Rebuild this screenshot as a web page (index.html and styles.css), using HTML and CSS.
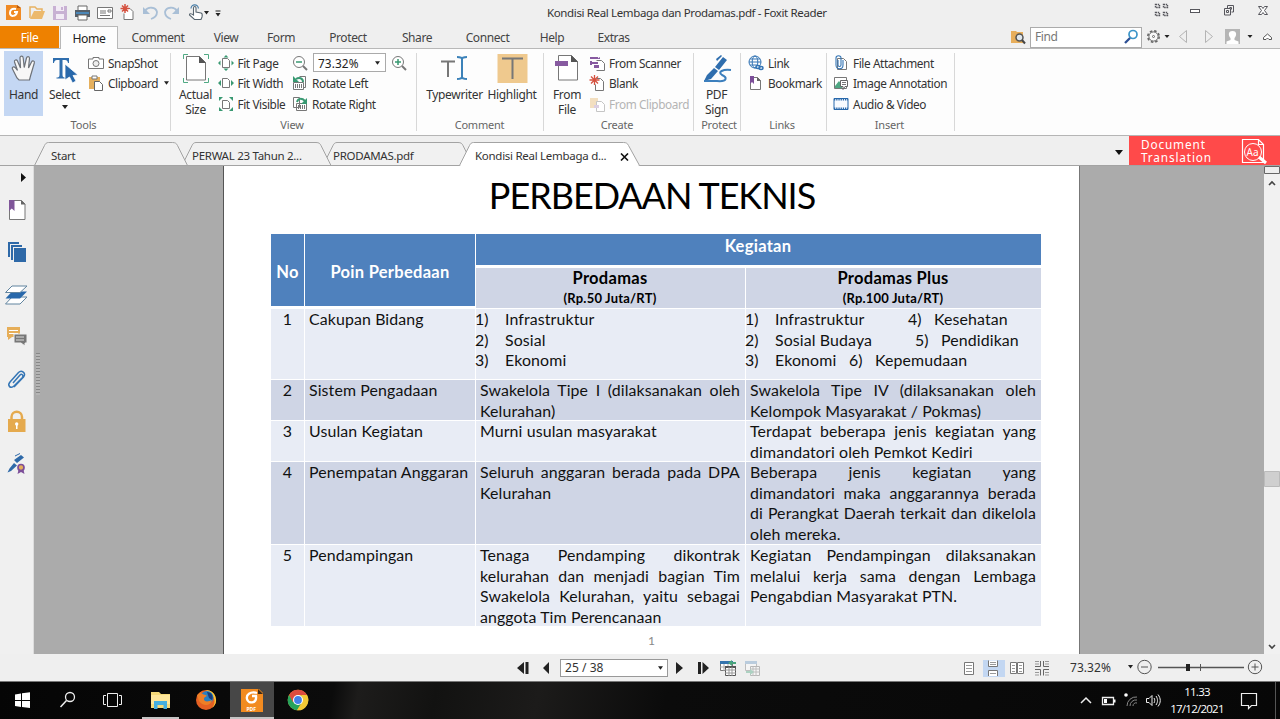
FILE: index.html
```html
<!DOCTYPE html>
<html lang="id">
<head>
<meta charset="utf-8">
<title>Kondisi Real Lembaga dan Prodamas.pdf - Foxit Reader</title>
<link rel="stylesheet" href="styles.css">
</head>
<body>
<svg class="defs" width="0" height="0">
  <symbol id="caret" viewBox="0 0 6 4"><path d="M0 0h6L3 4z" fill="#222"/></symbol>
</svg>

<header class="titlebar">
  <div class="quick">
    <svg width="230" height="26" viewBox="0 0 230 26">
      <path d="M6 5h11l4 3v12H6z" fill="#f08a24"/><path d="M17 5v3h4z" fill="#b85c10"/><path d="M16 9c-4-1-6 1-6 4 0 4 6 4 7-1h-3" fill="none" stroke="#fff" stroke-width="2"/>
      <path d="M30 18V7h5l2 2h5v4" fill="none" stroke="#e8b262" stroke-width="1.5"/><path d="M30 19l4-8h11l-3 8z" fill="#ecb96c"/>
      <path d="M53 6h14v14H53z" fill="#c8b1d3"/><path d="M56 6h8v5h-8zM56 14h8v5h-8z" fill="#f2ebf5"/><path d="M61 7h2v3h-2z" fill="#c8b1d3"/>
      <path d="M78 6h9v5h-9z" fill="#fff" stroke="#666"/><path d="M75 10h15v7H75z" fill="#555f69"/><path d="M76 12h13v2H76z" fill="#4b87b8"/><path d="M78 15h9v5h-9z" fill="#fff" stroke="#666"/>
      <path d="M97.500 7.500h15v11h-15z" fill="#fff" stroke="#777"/><path d="M100 11h6M100 13h6M100 15.500h10M108 10h3v2h-3z" stroke="#777" fill="none"/>
      <path d="M126 8.500h4l3 3v8h-9v-6" fill="#fff" stroke="#777"/><path d="M125 4v9M120.500 8.500h9M122 5.500l6 6M128 5.500l-6 6" stroke="#d55240" stroke-width="1.500"/>
      <path d="M145 11c3-5 11-4 12 1 0 4-3 6-6 7" fill="none" stroke="#a9bfd6" stroke-width="1.800"/><path d="M143 7v7h7z" fill="#a9bfd6"/>
      <path d="M177 11c-3-5-11-4-12 1 0 4 3 6 6 7" fill="none" stroke="#a9bfd6" stroke-width="1.800"/><path d="M179 7v7h-7z" fill="#a9bfd6"/>
      <path d="M193.500 15V8c0-2 2.500-2 2.500 0v4l5 1c1.500.5 1.500 2 1 4l-1 2.500h-6.500l-5-4.500c0-2 2-1.500 4 0z" fill="#fff" stroke="#58656f" stroke-width="1.100"/><path d="M191 8.500a3.700 3.700 0 0 1 7.400 0" fill="none" stroke="#477da8" stroke-width="1.200"/>
      <path d="M204 11h5l-2.500 3.500zM215.500 13h5l-2.500 3.500zM215.500 10.500h5v1h-5z" fill="#222"/>
    </svg>
  </div>
  <h1 class="apptitle">Kondisi Real Lembaga dan Prodamas.pdf - Foxit Reader</h1>
  <svg class="winctl" width="130" height="26" viewBox="1150 0 130 26" fill="none" stroke="#56565c">
    <path d="M1155.500 4.500h4v3h-4zM1163.500 4.500h4v3h-4zM1155.500 12.500h4v3h-4zM1163.500 12.500h4v3h-4z" stroke-dasharray="1.500 .7" stroke-width="1.400"/>
    <rect x="1190.500" y="9.500" width="9" height="3" fill="#fff"/>
    <path d="M1227.500 8V5.500h6v6.500h-2M1224.500 8.500h6v6.500h-6z"/><path d="M1226.500 10.500h2v2h-2zM1229.500 7.500h2v2"/>
    <path d="M1258.500 6.500h3l1.500 2 1.500-2h3l-3 4 3 4h-3l-1.500-2-1.500 2h-3l3-4z" fill="#fff"/>
  </svg>
</header>

<nav class="menubar">
  <span class="file">File</span><span class="home">Home</span><span class="m w80">Comment</span><span class="m w56">View</span><span class="m w54">Form</span><span class="m w80">Protect</span><span class="m w58">Share</span><span class="m w83">Connect</span><span class="m w46">Help</span><span class="m w77">Extras</span>
  <div class="search">
    <svg width="18" height="16" viewBox="0 0 18 16"><path d="M1 2h5l1 1h6v11H1z" fill="#e7ae5c"/><circle cx="9.500" cy="8.500" r="3.500" fill="#dfe7ee" stroke="#555" stroke-width="1.500"/><path d="M12 11l3 3.500" stroke="#444" stroke-width="2"/></svg>
    <label class="find"><span>Find</span><svg width="16" height="16" viewBox="0 0 16 16"><circle cx="10" cy="5.500" r="4" fill="#fff" stroke="#3b94c8" stroke-width="1.700"/><path d="M7 9l-5 5" stroke="#2c4f94" stroke-width="2.300"/></svg></label>
    <svg width="134" height="22" viewBox="1146 26 134 22" fill="none" stroke="#666">
      <circle cx="1153.500" cy="36.500" r="5.700" stroke-dasharray="2.500 1.980" stroke-width="1.600"/><circle cx="1153.500" cy="36.500" r="4.600" fill="#f8f8f8"/><circle cx="1153.500" cy="36.500" r="1"/>
      <path d="M1164.500 35h5l-2.500 3z" fill="#222" stroke="none"/>
      <path d="M1186.500 30.500v12l-7-6zM1205.500 30.500v12l7-6z" stroke="#b3b3b3"/>
      <path d="M1225 29h15v15h-15z" fill="#b5b5b5" stroke="none"/><path d="M1232.500 31c5 0 4 5 2 7v2l4 1.500V44h-12v-2.500l4-1.500v-2c-2-2-3-7 2-7z" fill="#fff" stroke="none"/>
      <path d="M1247.500 35h5l-2.500 3z" fill="#222" stroke="none"/>
      <path d="M1263.500 37.500l4-3.500 4 3.500v2h-2.500l-1.500-1.500-1.500 1.500h-2.500z" fill="#fff" stroke="#555"/>
    </svg>
  </div>
</nav>

<section class="ribbon">
  <div class="group g-tools">
    <div class="body">
      <button class="big on"><svg width="32" height="31" viewBox="0 0 32 31"><path d="M9 25L4.500 16c-1-2 1.500-3 3-1l2 2.500L6.500 9c-.5-2 2-3 3-1l3 7-.5-10c0-2.500 3-2.500 3.200 0l1 9.500L18.500 5c.5-2 3-2 3 .3L20.500 15l3-6c1-2 3.500-1 2.800 1L22.500 23l-1 4H11z" fill="#f7f7f7" stroke="#6e7278" stroke-width="1.200"/></svg><b>Hand</b></button>
      <button class="big"><svg width="32" height="31" viewBox="0 0 32 31"><path d="M4 5h16v5h-1c-.5-2.500-1-3-5.500-3v15c0 2 1 2.500 3 2.500v1H7.500v-1c2 0 3-.5 3-2.500V7C6 7 5.500 7.500 5 10H4z" fill="#2f6eae"/><path d="M16 11l13 11-5 .5 3 5.500-3.500 2-3-6-4.500 3z" fill="#2868ab" stroke="#fff" stroke-width=".8"/></svg><b>Select</b><svg class="car" width="6" height="4"><use href="#caret"/></svg></button>
      <div class="rows tl">
        <p><svg width="16" height="16" viewBox="0 0 16 16"><path d="M1 4h4V2.500h6V4h4.500v9.500H.5V4z" fill="#fff" stroke="#777"/><circle cx="8" cy="8.500" r="3" fill="#eee" stroke="#777"/></svg>SnapShot</p>
        <p><svg width="16" height="16" viewBox="0 0 16 16"><path d="M1 2h11v12H1z" fill="#e6b05d"/><path d="M4 1h5v3H4z" fill="#fff" stroke="#777"/><path d="M6.500 6.500h5l3 3v6h-8z" fill="#fff" stroke="#666"/></svg>Clipboard<svg class="car2" width="5" height="4"><use href="#caret"/></svg></p>
      </div>
    </div>
    <footer>Tools</footer>
  </div>
  <div class="group g-view">
    <div class="body">
      <button class="big wide"><svg width="32" height="31" viewBox="0 0 32 31"><path d="M3.500 6V1.500H8M24 1.500h4.500V6M3.500 25v4.500H8M24 29.500h4.500V25" fill="none" stroke="#50aa84"/><path d="M6.500 3.500h13l6 6v17.500h-19z" fill="#fff" stroke="#777"/><path d="M19 3v7h7z" fill="#555"/></svg><b>Actual<br>Size</b></button>
      <div class="rows v1">
        <p><svg width="16" height="16" viewBox="0 0 16 16"><path d="M4.500 3.500h5l2 2v7h-7z" fill="#fff" stroke="#777"/><path d="M8 0l2.500 2.500h-5zM8 16l2.500-2.500h-5zM0 8l2.500-2.500v5zM16 8l-2.500-2.500v5z" fill="#399972"/></svg>Fit Page</p>
        <p><svg width="16" height="16" viewBox="0 0 16 16"><path d="M4.500 3.500h5l2 2v7h-7z" fill="#fff" stroke="#777"/><path d="M0 8l3-3v6zM16 8l-3-3v6z" fill="#399972"/></svg>Fit Width</p>
        <p><svg width="16" height="16" viewBox="0 0 16 16"><path d="M4.500 4.500h5l2 2v6h-7z" fill="#fff" stroke="#777"/><path d="M1 1h4L1 5zM15 1h-4l4 4zM1 15h4l-4-4zM15 15h-4l4-4z" fill="#399972"/></svg>Fit Visible</p>
      </div>
      <div class="rows v2">
        <p><svg width="16" height="16" viewBox="0 0 16 16"><circle cx="7" cy="7" r="5.500" fill="#fff" stroke="#777"/><path d="M11 11l4 4" stroke="#777" stroke-width="2"/><path d="M4 7h6" stroke="#399972" stroke-width="1.500"/></svg><span class="zoombox">73.32%<svg width="5" height="4"><use href="#caret"/></svg></span><svg width="16" height="16" viewBox="0 0 16 16"><circle cx="7" cy="7" r="5.500" fill="#fff" stroke="#777"/><path d="M11 11l4 4" stroke="#777" stroke-width="2"/><path d="M4 7h6M7 4v6" stroke="#399972" stroke-width="1.500"/></svg></p>
        <p><svg width="16" height="16" viewBox="0 0 16 16"><path d="M7.500 1.500h6v11h-2M1.500 7.500h10v7h-10z" fill="#fff" stroke="#777"/><path d="M3.500 9v4M5.500 9v4M7.500 9v4M9.500 9v4" stroke="#777"/><path d="M11 7c0-4-4-5-7-3" stroke="#399972" stroke-width="2" fill="none"/><path d="M1 1v6h6z" fill="#399972"/></svg>Rotate Left</p>
        <p><svg width="16" height="16" viewBox="0 0 16 16"><path d="M1.500 1.500h6v10h-6zM4.500 7.500h10v7h-10z" fill="#fff" stroke="#777"/><path d="M6.500 9v4M8.500 9v4M10.500 9v4M12.500 9v4" stroke="#777"/><path d="M5 6c1-4 5-4 8-1" stroke="#399972" stroke-width="2" fill="none"/><path d="M15 2v6H9z" fill="#399972"/></svg>Rotate Right</p>
      </div>
    </div>
    <footer>View</footer>
  </div>
  <div class="group g-comment">
    <div class="body">
      <button class="big tw"><svg width="32" height="31" viewBox="0 0 32 31" fill="none"><path d="M2 8.500h14M9 8v16" stroke="#777" stroke-width="2"/><path d="M18 4c3 0 5 1 5 2 0-1 2-2 5-2M23 6v18M18 26c3 0 5-1 5-2 0 1 2 2 5 2" stroke="#3c82b9" stroke-width="2"/></svg><b>Typewriter</b></button>
      <button class="big hl"><svg width="32" height="31" viewBox="0 0 32 31"><path d="M1.500 1h30v29h-30z" fill="#efc98e"/><path d="M6 5.500h21M16.500 6v20" stroke="#777" stroke-width="2"/></svg><b>Highlight</b></button>
    </div>
    <footer>Comment</footer>
  </div>
  <div class="group g-create">
    <div class="body">
      <button class="big ff"><svg width="32" height="31" viewBox="0 0 32 31"><path d="M7.500 2.500h13l6 6v18.500h-19z" fill="#fff" stroke="#777"/><path d="M20 2v7h7z" fill="#555"/><path d="M4 8h13v5H4z" fill="#875aa0"/></svg><b>From<br>File</b></button>
      <div class="rows cr">
        <p><svg width="16" height="16" viewBox="0 0 16 16"><path d="M7.500 5.500h5l3 3v7h-8" fill="#fff" stroke="#777"/><path d="M1 2h8v2H1zM1 6h2v4H1zM3 7h6v2H3zM8 4l3-2v2z" fill="#875aa0"/><path d="M5 10h5v3H5z" fill="#875aa0"/></svg>From Scanner</p>
        <p><svg width="16" height="16" viewBox="0 0 16 16"><path d="M7.500 3.500h4l3 3v9h-8v-6" fill="#fff" stroke="#777"/><path d="M5.500 0v10M.5 5h10M2 1.500l7 7M9 1.500l-7 7" stroke="#d55240" stroke-width="1.300"/></svg>Blank</p>
        <p class="off"><svg width="16" height="16" viewBox="0 0 16 16"><path d="M1 2h8v10H1z" fill="#f3dfc0"/><path d="M7.500 5.500h5l3 3v7h-8z" fill="#fff" stroke="#c5c5c5"/><path d="M5 9h5v3H5z" fill="#dccfe2"/></svg>From Clipboard</p>
      </div>
    </div>
    <footer>Create</footer>
  </div>
  <div class="group g-protect">
    <div class="body">
      <button class="big"><svg width="32" height="31" viewBox="0 0 32 31"><path d="M14 14L22 4l4 3-8 10zM13 15l4 3-7 8-7 2 3-6zM15 6l5-4 1 1-5 5z" fill="#2f6eae"/><path d="M30 17c-8-1-14 2-9 5 5 2 6 7-5 6H3" fill="none" stroke="#3c7fbd" stroke-width="2"/></svg><b>PDF<br>Sign</b></button>
    </div>
    <footer>Protect</footer>
  </div>
  <div class="group g-links">
    <div class="body"><div class="rows lk">
      <p><svg width="16" height="16" viewBox="0 0 16 16" fill="none" stroke="#3475b5"><circle cx="7" cy="7" r="6"/><ellipse cx="7" cy="7" rx="2.800" ry="6"/><path d="M1 7h12M2 4h10M2 10h8"/><path d="M8 12c0-2 4-2 4 0s-4 2-4 0zM11 13c0-2 4-2 4 0s-4 2-4 0z" stroke-width="1.500" fill="#fff"/></svg>Link</p>
      <p><svg width="16" height="16" viewBox="0 0 16 16"><path d="M2.500 2.500h7l3 3v9h-10z" fill="#fff" stroke="#777"/><path d="M9 2v4h4z" fill="#666"/><path d="M2 1h4v8L4 7 2 9z" fill="#7c4e99"/></svg>Bookmark</p>
    </div></div>
    <footer>Links</footer>
  </div>
  <div class="group g-insert">
    <div class="body"><div class="rows in">
      <p><svg width="16" height="16" viewBox="0 0 16 16"><path d="M4.500 3.500h6l3 3v8h-9z" fill="#fff" stroke="#777"/><path d="M5 5v5c0 2 3 2 3 0V3c0-3-5-3-5 0v7c0 5 7 5 7 0V5" fill="none" stroke="#3475b5" stroke-width="1.100"/></svg>File Attachment</p>
      <p><svg width="16" height="16" viewBox="0 0 16 16"><path d="M1.500 2.500h12v11h-12z" fill="#fff" stroke="#777"/><path d="M2 11l4-5 3 4v3H2z" fill="#4fa783"/><path d="M7.500 5.500h7v6H12l-2 3v-3H7.500z" fill="#fff" stroke="#666"/><path d="M9 7.500h4M9 9.500h4" stroke="#777"/></svg>Image Annotation</p>
      <p><svg width="16" height="16" viewBox="0 0 16 16"><path d="M1 2.500h14v11H1z" fill="#f8fbff" stroke="#2868ab"/><path d="M1 3.500h14M1 12.500h14" stroke="#2868ab" stroke-width="2" stroke-dasharray="1.300 .9"/></svg>Audio &amp; Video</p>
    </div></div>
    <footer>Insert</footer>
  </div>
</section>

<div class="tabs">
  <svg class="tabshape" width="1280" height="30" viewBox="0 136 1280 30" fill="#f1f1f1" stroke="#a3a3a3">
    <path d="M323 165.500l10-20c1-2 2-3 4-3h121c3 0 4 1 5 3l10 20"/>
    <path d="M182 165.500l10-20c1-2 2-3 4-3h120c3 0 4 1 5 3l10 20"/>
    <path d="M34.500 165.500l10-20c1-2 2-3 4-3h124c3 0 4 1 5 3l10 20"/>
    <path d="M0 165.500h1280"/>
    <path d="M459.500 165.500l10-20c1-2 2-3 4-3h150c3 0 4 1 5 3l11 20" fill="#fff"/><path d="M460.500 165.500h178" stroke="#fff"/>
  </svg>
  <span class="t1">Start</span><span class="t2">PERWAL 23 Tahun 2...</span><span class="t3">PRODAMAS.pdf</span><span class="t4">Kondisi Real Lembaga d...</span>
  <svg class="x" width="9" height="8" viewBox="0 0 9 8"><path d="M1 .5l7 7M8 .5l-7 7" stroke="#111" stroke-width="1.600"/></svg>
  <svg class="tabcar" width="8" height="5" viewBox="0 0 8 5"><path d="M0 0h8L4 5z" fill="#111"/></svg>
  <div class="promo"><div><p>Document</p><p>Translation</p></div>
    <svg width="28" height="28" viewBox="0 0 28 28" fill="none" stroke="#fff"><path d="M2.500 2.500h16l5 5v18h-21zM18.500 2.500v5h5" stroke-width="1.200"/><circle cx="13" cy="15" r="8.500" fill="#ff4a4a"/><path d="M19 20l7 6" stroke-width="3"/><text x="6.500" y="18.500" class="aa">Aa</text></svg></div>
</div>

<main class="work">
  <aside class="side">
    <svg width="34" height="488" viewBox="0 166 34 488">
      <path d="M21 173l5 4.500-5 4.500z" fill="#111"/>
      <path d="M9.500 200.500h12l3.500 3.500v15.500H9.500z" fill="#fff" stroke="#777"/><path d="M21 200v4.500h4.500z" fill="#666"/><path d="M9 200h5.500v11l-2.700-2.500L9 211z" fill="#80569a"/>
      <path d="M8 242h11v2h-9v13H8z" fill="#2e69a8"/><path d="M11 245h11v2h-9v13h-2z" fill="#2e69a8"/><path d="M14 248h12v14H14z" fill="#2e69a8"/>
      <path d="M12 297h15l-7 7H5.500z" fill="#fff" stroke="#61849f"/><path d="M12 291.500h15l-7 7H5.500z" fill="#2868ab"/><path d="M12 286h15l-7 6.500H5.500z" fill="#fff" stroke="#61849f"/>
      <path d="M7 327h13v10h-8l-4 3v-3H7z" fill="#e6ae59"/><path d="M9 330.500h9M9 333.500h9" stroke="#fff"/><path d="M14 334h13v9h-2v3l-4-3h-7z" fill="#777" stroke="#efefef"/><path d="M16 337h8M16 340h8" stroke="#ddd"/>
      <path d="M13 383l7-8c1.500-1.500 4 0 2.500 2.500L14 386c-3.500 3.500-7-.5-4-4l8.500-9.500c3-3 8 .5 5 4.500l-9.500 10" fill="none" stroke="#3475b5" stroke-width="1.500"/>
      <path d="M11.500 420v-3c0-7 10.500-7 10.500 0v3" fill="none" stroke="#e5aa4e" stroke-width="2.500"/><path d="M8 419h17.500v13H8z" fill="#e5aa4e"/><circle cx="16.700" cy="424" r="1.700" fill="#fff"/><path d="M16 425h1.500v4H16z" fill="#fff"/>
      <path d="M14 460l7-5 3 2.500-7 5.500zM14 463l3 2.500-6 5.500-3.500 1.500 2-4z" fill="#2e69a8"/><path d="M15 456l5-2.500" stroke="#2e69a8"/><circle cx="21" cy="467.500" r="3" fill="#e6ae59" stroke="#7c4e99" stroke-width="1.700"/><path d="M18.500 470l-1 4 3.500-2 3.500 2-1-4" fill="#7c4e99"/>
    </svg>
  </aside>
  <div class="canvas">
    <div class="grip"></div>
    <article class="sheet">
      <h2>PERBEDAAN TEKNIS</h2>
      <div class="table">
        <div class="hd no">No</div><div class="hd poin">Poin Perbedaan</div><div class="hd keg">Kegiatan</div>
        <div class="sub">Prodamas<small>(Rp.50 Juta/RT)</small></div><div class="sub">Prodamas Plus<small>(Rp.100 Juta/RT)</small></div>
        <div class="n">1</div><div>Cakupan Bidang</div>
        <div class="list"><p><i>1)</i>Infrastruktur</p><p><i>2)</i>Sosial</p><p><i>3)</i>Ekonomi</p></div>
        <div class="list"><p><i>1)</i><span class="a1">Infrastruktur</span><i class="k">4)</i>Kesehatan</p><p><i>2)</i><span class="a2">Sosial Budaya</span><i class="k">5)</i>Pendidikan</p><p><i>3)</i><span class="a3">Ekonomi</span><i class="k">6)</i>Kepemudaan</p></div>
        <div class="n alt">2</div><div class="alt">Sistem Pengadaan</div>
        <div class="alt"><p class="j">Swakelola Tipe I (dilaksanakan oleh</p><p>Kelurahan)</p></div>
        <div class="alt"><p class="j">Swakelola Tipe IV (dilaksanakan oleh</p><p>Kelompok Masyarakat / Pokmas)</p></div>
        <div class="n">3</div><div>Usulan Kegiatan</div>
        <div><p>Murni usulan masyarakat</p></div>
        <div><p class="j">Terdapat beberapa jenis kegiatan yang</p><p>dimandatori oleh Pemkot Kediri</p></div>
        <div class="n alt">4</div><div class="alt">Penempatan Anggaran</div>
        <div class="alt"><p class="j">Seluruh anggaran berada pada DPA</p><p>Kelurahan</p></div>
        <div class="alt"><p class="j">Beberapa jenis kegiatan yang</p><p class="j">dimandatori maka anggarannya berada</p><p class="j">di Perangkat Daerah terkait dan dikelola</p><p>oleh mereka.</p></div>
        <div class="n">5</div><div>Pendampingan</div>
        <div><p class="j">Tenaga Pendamping dikontrak</p><p class="j">kelurahan dan menjadi bagian Tim</p><p class="j">Swakelola Kelurahan, yaitu sebagai</p><p>anggota Tim Perencanaan</p></div>
        <div><p class="j">Kegiatan Pendampingan dilaksanakan</p><p class="j">melalui kerja sama dengan Lembaga</p><p>Pengabdian Masyarakat PTN.</p></div>
      </div>
      <div class="pageno">1</div>
    </article>
  </div>
  <svg class="scroll" width="16" height="488" viewBox="1264 166 16 488"><path d="M1264 166h16v488h-16z" fill="#f1f1f1"/><path d="M1264.500 166.500h15v7h-15z" fill="#eee" stroke="#666"/><path d="M1269 185l3-3 3 3M1269 645l3 3 3-3" fill="none" stroke="#444" stroke-width="1.600"/><path d="M1264.500 471.500h15v15h-15z" fill="#cfcfcf" stroke="#bbb"/></svg>
</main>

<div class="status">
  <svg width="44" height="27" viewBox="514 654 44 27" fill="#222"><path d="M524 662v12l-7-6zM525.500 662h3v12h-3zM549 662v12l-6-6z"/><path d="M524.500 661v14" stroke="#efefef"/></svg>
  <span class="pagebox">25 / 38<svg width="5" height="4"><use href="#caret"/></svg></span>
  <svg width="96" height="27" viewBox="670 654 96 27"><path d="M676 662l7 6-7 6zM698 662h3v12h-3zM702.500 662l6.500 6-6.500 6z" fill="#222"/>
    <path d="M720.500 661.500h12v9h-12z" fill="#fff" stroke="#777"/><path d="M720 661h13v3h-13z" fill="#3574ae"/><path d="M720 667h13M724 664v7M728 664v7" stroke="#aaa"/><path d="M725.500 666.500h10v9h-10z" fill="#fff" stroke="#555"/><path d="M725 667h11" stroke="#555" stroke-width="2"/><path d="M725 670h11M725 673h11M729 667v9M732 667v9" stroke="#999"/><path d="M728 663l4-3v2h4v2h-4v2z" fill="#49a57d"/>
    <g opacity=".4"><path d="M745.500 661.500h11v9h-11z" fill="#fff" stroke="#777"/><path d="M745 661h12v3h-12z" fill="#6c9ac3"/><path d="M750.500 666.500h9v9h-9z" fill="#fff" stroke="#666"/><path d="M750 669h10M750 672h10M753 667v9M756 667v9" stroke="#777"/><path d="M754 672l-4-3v2h-4v2h4v2z" fill="#49a57d"/></g></svg>
  <svg class="modes" width="92" height="27" viewBox="960 654 92 27" fill="none" stroke="#777"><path d="M983 660h22v17h-22z" fill="#c3d7f2" stroke="none"/><path d="M964.500 662.500h9v12h-9z" fill="#fff"/><path d="M966 665.500h6M966 668.500h6M966 671.500h6" stroke="#999"/><path d="M988.500 660.500v6h9v-6M988.500 676v-5.500h9v5.500" fill="#fff"/><path d="M990 662.500h6M990 664.500h6M990 673.500h6" stroke="#999"/><path d="M1010.500 662.500h6v11h-6zM1017.500 662.500h6v11h-6z" fill="#fff"/><path d="M1012 665.500h3M1012 668.500h3M1012 671.500h3M1019 665.500h3M1019 668.500h3M1019 671.500h3" stroke="#999"/><path d="M1035 666.500h5.500V661M1043.500 661v5.500h5.500M1035 669.500h5.500v6M1043.500 675.500v-6h5.500" stroke="#666"/><path d="M1035 661.500h4M1035 664h4M1045 661.500h4M1045 664h4M1035 672.500h4M1035 675h4M1045 672.500h4M1045 675h4" stroke="#999"/></svg>
  <span class="zoomtext">73.32%</span>
  <svg class="slider" width="140" height="27" viewBox="1124 654 140 27" fill="none" stroke="#555"><path d="M1128 665h5l-2.500 3.500z" fill="#222" stroke="none"/><circle cx="1144.500" cy="667" r="6.700"/><path d="M1141 667h7"/><path d="M1158 667.500h86" stroke-width="1.500"/><path d="M1186 664h4v7h-4z" fill="#222" stroke="none"/><path d="M1200.500 664v7"/><circle cx="1255" cy="667" r="6.700"/><path d="M1251.500 667h7M1255 663.500v7"/></svg>
</div>

<div class="taskbar">
  <svg width="320" height="37" viewBox="0 682 320 37">
    <path d="M15 694.500l6-1v6.500h-6zM22 693.300l8-1v7.700h-8zM15 701h6v6l-6-1zM22 701h8v7l-8-1z" fill="#fff"/>
    <circle cx="70" cy="697" r="4.500" fill="none" stroke="#eee" stroke-width="1.300"/><path d="M66.500 700.500l-6 6.500" stroke="#eee" stroke-width="1.500"/>
    <path d="M107.500 693.500h10v13h-10zM106 695.500h-2.500v9h2.500M119 695.500h2.500v9H119" fill="none" stroke="#eee"/>
    <path d="M151 692h8l2 2h9v14h-19z" fill="#f5d978"/><path d="M151 695h19v9h-19z" fill="#ffe79b"/><path d="M154 709v-8h13v8h-3.500v-4h-6v4z" fill="#45afe0"/>
    <circle cx="206" cy="700" r="10" fill="#e56022"/><path d="M206 690a10 10 0 0 1 6 18c5-6 2-12-2-14z" fill="#fbc637"/><circle cx="207" cy="697.500" r="6.500" fill="#287fc0"/><path d="M197 695l4-3c0 3 5 2 6 4-3 1-4 3-2 5 2 1 5 0 7-1-1 6-9 7-13 1z" fill="#ee7f26"/><path d="M207 692c4 0 7 4 5 8l-3-2z" fill="#183b79"/>
    <path d="M230 682h44v37h-44z" fill="#474747"/>
    <path d="M241 689h18l4 4v19h-22z" fill="#f28b20"/><path d="M258 689v5h5z" fill="#3b2b1b"/><path d="M257 693c-7-2-11 2-10 6 1 5 10 5 9-3h-4" fill="none" stroke="#fff" stroke-width="2.300"/><text x="246.500" y="710.500" class="pdf">PDF</text>
    <circle cx="298" cy="700" r="10.300" fill="#e1b62d"/><path d="M289 695a10.300 10.300 0 0 1 18 0h-9l-5 8z" fill="#dc4c3f"/><path d="M289 695a10.300 10.300 0 0 0 8 15.300l5-8-4-2-5 2z" fill="#26a35b"/><path d="M307 695a10.300 10.300 0 0 1-10 15.300l5-8V695z" fill="#f3c936"/><circle cx="298" cy="700" r="5" fill="#fff"/><circle cx="298" cy="700" r="3.900" fill="#4280e8"/>
    <path d="M142 717h37v2h-37zM230 717h44v2h-44z" fill="#c4c4c4"/>
  </svg>
  <svg class="tray" width="90" height="37" viewBox="1075 682 90 37" fill="none" stroke="#eee"><path d="M1081 703l5-5 5 5" stroke-width="1.500"/><path d="M1102.500 697.500h11v7h-11z" stroke-width="1.300"/><path d="M1104 699h3v4h-3zM1114 699.500h1.500v3h-1.500z" fill="#fff" stroke="none"/><circle cx="1126" cy="695" r="1.800" fill="#fff" stroke="none"/><path d="M1127 706a9 9 0 0 1 10-9M1130 706a6 6 0 0 1 7-6M1133 706a3 3 0 0 1 4-3" stroke="#888"/><path d="M1146.500 698.500h2.500l3-3v10l-3-3h-2.500z"/><path d="M1154 698c1 1.500 1 3 0 5M1156 696c2 3 2 6 0 9M1158 694.500c3 4 3 8 0 12"/></svg>
  <div class="clock">11.33<br>17/12/2021</div>
  <svg class="notif" width="40" height="37" viewBox="1240 682 40 37"><path d="M1241.500 693.500h15v12h-5l-3 3v-3h-7z" fill="none" stroke="#eee" stroke-width="1.200"/><path d="M1275.500 682v37" stroke="#555"/></svg>
</div>
</body>
</html>
```
FILE: styles.css
```css
* { box-sizing: border-box; }
body { margin: 0; width: 1280px; height: 719px; overflow: hidden; background: #efefef; color: #333; font: 11.8px/16px "Noto Sans", sans-serif; letter-spacing: -.4px; display: flex; flex-direction: column; }
p, h1, h2 { margin: 0; font-weight: normal; }
svg { display: block; flex: none; }
.defs { position: absolute; }

.titlebar { height: 26px; flex: none; display: flex; align-items: center; }
.quick { width: 230px; }
.apptitle { flex: 1; padding-left: 317px; font-size: 11.5px; letter-spacing: -.36px; white-space: nowrap; }

.menubar { height: 23px; flex: none; display: flex; border-bottom: 1px solid #b8b8b8; line-height: 24px; text-align: center; font-size: 12px; color: #444; }
.file { width: 59px; background: #ee8100; color: #fff; }
.home { width: 58px; margin-left: 1px; height: 23px; background: #fdfdfd; border: 1px solid #b8b8b8; border-bottom: 0; color: #222; font-size: 12.2px; }
.w80 { width: 80px; } .w56 { width: 56px; } .w54 { width: 54px; } .w58 { width: 58px; }
.w83 { width: 83px; } .w46 { width: 46px; } .w77 { width: 77px; }
.search { margin-left: auto; display: flex; align-items: center; }
.find { width: 112px; height: 21px; margin: 0 4px 0 2px; padding: 0 2px 0 4px; display: flex; align-items: center; justify-content: space-between; border: 1px solid #ababab; background: #fff; color: #777; }

.ribbon { height: 87px; flex: none; background: #fdfdfd; border-bottom: 1px solid #b5b5b5; display: flex; }
.group { position: relative; display: flex; flex-direction: column; }
.group::after { content: ""; position: absolute; right: 0; top: 4px; bottom: 4px; width: 1px; background: #d8d8d8; }
.group footer { height: 17px; font-size: 11px; letter-spacing: -.2px; text-align: center; color: #666; }
.body { height: 68px; display: flex; align-items: flex-start; }
.g-tools { width: 171px; padding-left: 4px; }
.g-tools footer { padding-right: 8px; }
.g-view { width: 246px; padding-left: 6px; }
.g-view footer { padding-right: 10px; }
.g-comment { width: 127px; padding-left: 5px; }
.g-comment footer { padding-right: 7px; }
.g-create { width: 150px; padding-left: 1px; }
.g-create footer { padding-right: 5px; }
.g-protect { width: 47px; padding-left: 3px; }
.g-links { width: 86px; padding-left: 7px; }
.g-links footer { padding-right: 11px; }
.g-insert { width: 128px; padding-left: 6px; }
.g-insert footer { padding-right: 9px; }
.big { width: 39px; height: 65px; margin: 2px 0 0; padding: 2px 0 0; border: 0; background: none; color: #333; font: 12px/15px "Noto Sans", sans-serif; letter-spacing: -.35px; display: flex; flex-direction: column; align-items: center; }
.big b { font-weight: normal; margin-top: 3px; white-space: nowrap; }
.on { background: #c4d7f3; }
.g-tools .big + .big { width: 42px; padding-left: 1px; }
.car { margin-top: 3px; }
.wide { width: 37px; }
.tw { width: 65px; } .hl { width: 50px; } .ff { width: 44px; }
.rows { padding-top: 3.500px; white-space: nowrap; }
.rows p { height: 20.500px; display: flex; align-items: center; gap: 3px; }
.tl { padding-left: 3px; }
.tl p { gap: 4px; }
.car2 { margin-left: 2px; }
.v1 { padding-left: 4px; width: 78px; }
.v2 { padding-left: 1px; }
.v1 p { gap: 3.500px; }
.v2 p { margin-left: -1px; gap: 4px; }
.zoombox { width: 73px; height: 19px; margin: 0 1px 0 1px; padding: 0 5px 0 4px; border: 1px solid #aaa; background: #fff; color: #222; letter-spacing: .1px; display: flex; align-items: center; justify-content: space-between; }
.off { color: #b4b4b4; }
.cr p { gap: 4px; }
.lk p, .in p { gap: 4px; }

.tabs { height: 30px; flex: none; position: relative; display: flex; align-items: center; font-size: 11.5px; letter-spacing: -.28px; }
.tabshape { position: absolute; left: 0; top: 0; }
.tabs > span { position: relative; padding-top: 10px; white-space: nowrap; }
.t1 { width: 141px; margin-left: 51px; } .t2 { width: 141px; } .t3 { width: 142px; } .t4 { width: 145px; }
.x { position: relative; margin-top: 11px; }
.tabcar { position: relative; margin: 3px 6px 0 auto; }
.promo { position: relative; width: 151px; height: 29px; align-self: flex-start; background: #ff4a4a; color: #fff; display: flex; align-items: center; justify-content: space-between; padding: 0 12px; font: 11.8px/13px "Noto Sans", sans-serif; letter-spacing: .85px; }
.aa { font: 10px "Noto Sans", sans-serif; fill: #fff; stroke: none; letter-spacing: 0; }

.work { height: 488px; flex: none; display: flex; }
.side { width: 34px; background: #f0f0f0; border-right: 1px solid #ddd; overflow: hidden; }
.canvas { width: 1230px; background: #ababab; display: flex; align-items: flex-start; }
.grip { width: 4px; height: 42px; margin: 187px 185px 0 2px; background: repeating-linear-gradient(#888 0 1px, #b5b5b5 1px 3px); }
.sheet { width: 857px; height: 488px; margin-left: -2px; background: #fff; border-left: 1px solid #555; border-right: 1px solid #777; color: #111; font: 15.9px/20.6px Lato, sans-serif; letter-spacing: .12px; }
.sheet h2 { height: 68px; padding: 7px 0 0 1px; text-align: center; font-size: 36px; line-height: 44px; letter-spacing: -1.05px; color: #000; }
.table { width: 770px; margin-left: 47px; display: grid; grid-template-columns: 33px 170px 269px 295px; grid-template-rows: 33px 40px 70px 40px 40px 82px 81px; gap: 1px; }
.table > div { background: #e8ecf5; padding: 0 5px 0 4px; white-space: nowrap; overflow: visible; }
.table > .alt { background: #cfd5e5; }
.table > .n { text-align: center; padding-inline: 0; }
.table > .hd { background: #4f81bd; color: #fff; font-size: 16.5px; letter-spacing: .28px; font-weight: bold; text-align: center; border-bottom: 2px solid #fff; }
.table > .no, .table > .poin { grid-row: 1 / 3; line-height: 77px; padding-inline: 0; }
.table > .keg { grid-column: 3 / 5; padding-top: 2px; }
.table > .sub { background: #cfd5e5; font-size: 16.5px; letter-spacing: .28px; font-weight: bold; text-align: center; color: #000; line-height: 21px; }
.sub small { display: block; font-size: 13px; letter-spacing: .2px; line-height: 19px; }
.j { text-align: justify; text-align-last: justify; }
.table > .list { padding-left: 0; }
.list p { display: flex; }
.list p > i:first-child { width: 30px; margin-left: -1px; }
.list i { font-style: normal; width: 29px; flex: none; }
.list .k { width: 26px; }
.a1 { width: 133px; } .a2 { width: 140px; } .a3 { width: 74px; }
.pageno { text-align: center; font-size: 12px; color: #888; padding-top: 5px; }

.status { height: 28px; flex: none; border-bottom: 1px solid #777; background: #efefef; display: flex; align-items: center; padding-left: 514px; font-size: 12px; letter-spacing: .05px; }
.pagebox { width: 108px; height: 18px; margin: 0 2px; padding: 0 4px; border: 1px solid #999; background: #fff; display: flex; align-items: center; justify-content: space-between; }
.modes { margin-left: 194px; }
.zoomtext { width: 54px; margin-left: 18px; }

.taskbar { height: 37px; flex: none; display: flex; background: linear-gradient(100deg, #050505 0, #0b0b0b 26%, #1d1c1b 28%, #121211 34%, #1c1b1a 42%, #0b0b0b 52%, #070707 100%); color: #fff; }
.tray { margin-left: 755px; }
.clock { width: 64px; text-align: center; font: 11.5px/17px "Open Sans", sans-serif; letter-spacing: -.75px; padding-top: 1px; white-space: nowrap; }
.notif { margin-left: auto; }
.pdf { font: bold 5px "Noto Sans", sans-serif; letter-spacing: 0; fill: #fff; }
```
